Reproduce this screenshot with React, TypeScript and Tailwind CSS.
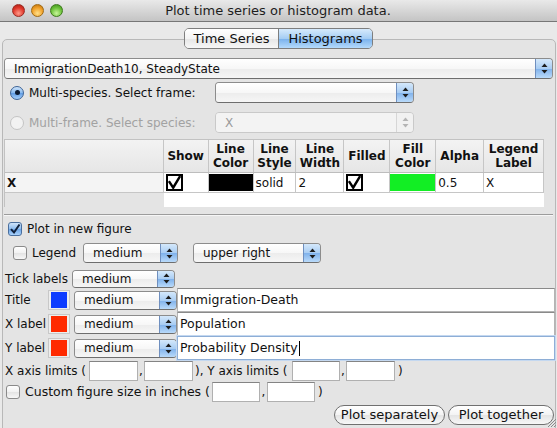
import React from "react";

function Arrows({ disabled }: { disabled?: boolean }) {
  const c = disabled ? "#b4b4b4" : "#1c1c1c";
  return (
    <svg width="7" height="11" viewBox="0 0 7 11">
      <polygon points="3.5,0.5 6.5,4 0.5,4" fill={c} />
      <polygon points="0.5,7 6.5,7 3.5,10.5" fill={c} />
    </svg>
  );
}

function Combo({ w, text, disabled }: { w: string; text?: string; disabled?: boolean }) {
  return (
    <div
      className={`flex h-full ${w} overflow-hidden rounded-[4px] border ${
        disabled ? "border-[#c9c9c9] text-[#9a9a9a]" : "border-[#8c8c8c] border-b-[#6e6e6e] text-[#111]"
      }`}
    >
      <div
        className={`flex flex-1 items-center pl-[9px] ${
          disabled
            ? "bg-[#f3f3f3]"
            : "bg-[linear-gradient(to_bottom,#ffffff_0%,#f7f7f7_50%,#ececec_51%,#f6f6f6_100%)]"
        }`}
      >
        {text}
      </div>
      <div
        className={`flex w-[17px] items-center justify-center border-l ${
          disabled
            ? "border-[#d6d6d6] bg-[#f1f1f1]"
            : "border-[#6f8fbf] bg-[linear-gradient(to_bottom,#d4e8fb_0%,#a9cdf3_50%,#7fb1eb_51%,#b9dafa_100%)]"
        }`}
      >
        <Arrows disabled={disabled} />
      </div>
    </div>
  );
}

function Field({ w }: { w: string }) {
  return <div className={`h-full ${w} border border-[#b0b0b0] border-t-[#848484] bg-white`} />;
}

function AquaCheck({ checked }: { checked?: boolean }) {
  return (
    <div
      className={`flex h-[14px] w-[14px] items-center justify-center rounded-[3px] border ${
        checked
          ? "border-[#4a6f9e] bg-[linear-gradient(to_bottom,#d0e5fb,#8cbcef_50%,#6aa3e6_51%,#a9d2fb)]"
          : "border-[#8a8a8a] bg-[linear-gradient(to_bottom,#ffffff,#f1f1f1_50%,#e3e3e3_51%,#f7f7f7)]"
      }`}
    >
      {checked && (
        <svg width="12" height="12" viewBox="0 0 12 12">
          <path d="M2 6.2 L5 9.5 L10.5 1.5" fill="none" stroke="#10203a" strokeWidth="2" />
        </svg>
      )}
    </div>
  );
}

function Radio({ checked, disabled }: { checked?: boolean; disabled?: boolean }) {
  return (
    <div
      className={`flex h-[14px] w-[14px] items-center justify-center rounded-full border ${
        checked
          ? "border-[#3d6396] bg-[linear-gradient(to_bottom,#cde3fa,#86b8ee_50%,#5f9be3_51%,#a6d0fb)]"
          : disabled
          ? "border-[#c4c4c4] bg-[#f2f2f2]"
          : "border-[#8a8a8a] bg-white"
      }`}
    >
      {checked && <div className="h-[5px] w-[5px] rounded-full bg-[#0c1a30]" />}
    </div>
  );
}

function TableCheck() {
  return (
    <div className="flex h-[17px] w-[17px] items-center justify-center border-2 border-black bg-white">
      <svg width="15" height="15" viewBox="0 0 15 15">
        <path d="M1 6 L6 13.5 L14 0" fill="none" stroke="#000" strokeWidth="2.8" />
      </svg>
    </div>
  );
}

function Swatch({ color }: { color: string }) {
  return (
    <div className="flex h-[20px] w-[22px] items-center justify-center border border-[#c8c8c8] bg-[#ededed]">
      <div className={`h-[16px] w-[16px] ${color}`} />
    </div>
  );
}

function LabelRow({ label, swatch, text, focused }: { label: string; swatch: string; text: string; focused?: boolean }) {
  return (
    <div className="flex h-[24px] items-center">
      <div className="w-[44px] pl-[1px]">{label}</div>
      <Swatch color={swatch} />
      <div className="ml-[4px] h-[19px]">
        <Combo w="w-[103px]" text="medium" />
      </div>
      <div
        className={`flex h-full flex-1 items-center border bg-white pl-[2px] text-[12.5px] ${
          focused ? "border-[#8eaed6] shadow-[0_0_0_1px_#c4d8f0]" : "border-[#b4b4b4] border-t-[#8a8a8a]"
        }`}
      >
        {text}
        {focused && <span className="ml-[1px] inline-block h-[15px] w-[1px] bg-black" />}
      </div>
    </div>
  );
}

const cols = [
  { w: "w-[159px]", label: "" },
  { w: "w-[45px]", label: "Show" },
  { w: "w-[45px]", label: "Line\nColor" },
  { w: "w-[43px]", label: "Line\nStyle" },
  { w: "w-[48px]", label: "Line\nWidth" },
  { w: "w-[46px]", label: "Filled" },
  { w: "w-[46px]", label: "Fill\nColor" },
  { w: "w-[48px]", label: "Alpha" },
  { w: "w-[60px]", label: "Legend\nLabel" },
];

export default function App() {
  return (
    <div className="relative h-[428px] w-[557px] overflow-hidden bg-[#e9e9e9] font-['DejaVu_Sans',sans-serif] text-[12px] text-[#111]">
      {/* title bar */}
      <div className="relative flex h-[22px] items-center border-b border-[#777] bg-[linear-gradient(to_bottom,#e9e9e9,#c4c4c4)] text-[13px] text-[#1d1d1d]">
        <div className="flex gap-[6px] pl-[12px]">
          <div className="h-[13px] w-[13px] rounded-full border border-[#9a2a22] bg-[radial-gradient(circle_at_50%_75%,#ff9a8a,#e0392c_55%,#a81a10)]" />
          <div className="h-[13px] w-[13px] rounded-full border border-[#a06a12] bg-[radial-gradient(circle_at_50%_75%,#ffe08a,#f0a12a_55%,#b86a08)]" />
          <div className="h-[13px] w-[13px] rounded-full border border-[#3d7a1c] bg-[radial-gradient(circle_at_50%_75%,#c8f59a,#6cc23a_55%,#3a8a18)]" />
        </div>
        <div className="flex-1 pr-[64px] text-center">Plot time series or histogram data.</div>
      </div>

      {/* tabs */}
      <div className="relative z-10 mt-[6px] flex h-[21px] justify-center">
        <div className="flex overflow-hidden rounded-[5px] border border-[#7e7e7e] text-[13px]">
          <div className="flex w-[94px] items-center justify-center border-r border-[#7e7e7e] bg-[linear-gradient(to_bottom,#ffffff,#f4f4f4_50%,#e6e6e6_51%,#f7f7f7)]">
            Time Series
          </div>
          <div className="flex w-[93px] items-center justify-center bg-[linear-gradient(to_bottom,#d6eafc,#a5cdf4_50%,#78b0ec_51%,#b4dafc)]">
            Histograms
          </div>
        </div>
      </div>

      {/* panel */}
      <div className="-mt-[10px] ml-[2px] w-[554px] rounded-[5px] border border-[#b8b8b8] bg-[#e4e4e4] pl-[1px] pt-[18px] pb-[40px]">
        <div className="h-[21px]">
          <Combo w="w-[549px]" text="ImmigrationDeath10, SteadyState" />
        </div>

        <div className="mt-[3px] flex h-[21px] items-center">
          <div className="ml-[6px] mr-[5px]">
            <Radio checked />
          </div>
          <div className="w-[186px]">Multi-species. Select frame:</div>
          <div className="h-full">
            <Combo w="w-[199px]" />
          </div>
        </div>

        <div className="mt-[9px] flex h-[21px] items-center text-[#a2a2a2]">
          <div className="ml-[6px] mr-[5px]">
            <Radio disabled />
          </div>
          <div className="w-[186px]">Multi-frame. Select species:</div>
          <div className="h-full">
            <Combo w="w-[199px]" text="X" disabled />
          </div>
        </div>

        {/* table */}
        <div className="mt-[6px] w-[540px] border-l border-t border-[#c2c2c2]">
          <div className="flex h-[33px] border-b border-[#bdbdbd] bg-[linear-gradient(to_bottom,#f3f3f3,#e6e6e6)] text-[12px] font-bold leading-[14px]">
            {cols.map((c, i) => (
              <div
                key={i}
                className={`flex ${c.w} items-center justify-center whitespace-pre border-r border-[#c6c6c6] text-center`}
              >
                {c.label}
              </div>
            ))}
          </div>
          <div className="flex h-[20px] border-b border-[#c6c6c6] bg-white">
            <div className="flex w-[159px] items-center border-r border-[#c6c6c6] bg-[#f4f4f4] pl-[2px] font-bold">X</div>
            <div className="flex w-[45px] items-center border-r border-[#c6c6c6] pl-[2px]">
              <TableCheck />
            </div>
            <div className="flex w-[45px] items-stretch border-r border-[#c6c6c6] py-[1px]">
              <div className="flex-1 bg-black" />
            </div>
            <div className="flex w-[43px] items-center border-r border-[#c6c6c6] pl-[2px]">solid</div>
            <div className="flex w-[48px] items-center border-r border-[#c6c6c6] pl-[2px]">2</div>
            <div className="flex w-[46px] items-center border-r border-[#c6c6c6] pl-[2px]">
              <TableCheck />
            </div>
            <div className="flex w-[46px] items-stretch border-r border-[#c6c6c6] py-[1px]">
              <div className="flex-1 bg-[#12ee24]" />
            </div>
            <div className="flex w-[48px] items-center border-r border-[#c6c6c6] pl-[2px]">0.5</div>
            <div className="flex w-[60px] items-center border-r border-[#c6c6c6] pl-[2px]">X</div>
          </div>
          <div className="flex h-[14px]">
            <div className="w-[159px]" />
            <div className="flex-1 bg-white" />
          </div>
        </div>

        <div className="mt-[7px] h-[2px] w-[549px] border-t border-[#9c9c9c] border-b border-b-[#f6f6f6]" />

        <div className="mt-[4px] flex h-[18px] items-center">
          <div className="ml-[4px] mr-[5px]">
            <AquaCheck checked />
          </div>
          <div>Plot in new figure</div>
        </div>

        <div className="mt-[5px] flex h-[20px] items-center">
          <div className="ml-[9px] mr-[5px]">
            <AquaCheck />
          </div>
          <div className="w-[51px]">Legend</div>
          <div className="h-full">
            <Combo w="w-[95px]" text="medium" />
          </div>
          <div className="ml-[15px] h-full">
            <Combo w="w-[128px]" text="upper right" />
          </div>
        </div>

        <div className="mt-[6px] flex h-[19px] items-center">
          <div className="w-[68px] pl-[1px]">Tick labels</div>
          <div className="h-[18px]">
            <Combo w="w-[103px]" text="medium" />
          </div>
        </div>

        <LabelRow label="Title" swatch="bg-[#0d3cff]" text="Immigration-Death" />
        <LabelRow label="X label" swatch="bg-[#ff2a00]" text="Population" />
        <LabelRow label="Y label" swatch="bg-[#ff2a00]" text="Probability Density" focused />

        <div className="mt-[1px] flex h-[20px] items-center">
          <div className="w-[85px] pl-[1px]">X axis limits (</div>
          <Field w="w-[49px]" />
          <div className="w-[6px] text-center">,</div>
          <Field w="w-[49px]" />
          <div className="w-[99px] pl-[2px]">), Y axis limits (</div>
          <Field w="w-[48px]" />
          <div className="w-[6px] text-center">,</div>
          <Field w="w-[49px]" />
          <div className="pl-[3px]">)</div>
        </div>

        <div className="mt-[1px] flex h-[20px] items-center">
          <div className="ml-[2px] mr-[5px]">
            <AquaCheck />
          </div>
          <div className="w-[187px] text-[12.5px]">Custom figure size in inches (</div>
          <Field w="w-[48px]" />
          <div className="w-[7px] text-center">,</div>
          <Field w="w-[48px]" />
          <div className="pl-[3px]">)</div>
        </div>

        <div className="mt-[3px] flex h-[20px] justify-end gap-[3px] pr-[1px] text-[13px]">
          <div className="flex w-[111px] items-center justify-center rounded-full border border-[#707070] bg-[linear-gradient(to_bottom,#ffffff,#f3f3f3_50%,#e4e4e4_51%,#f7f7f7)]">
            Plot separately
          </div>
          <div className="flex w-[106px] items-center justify-center rounded-full border border-[#707070] bg-[linear-gradient(to_bottom,#ffffff,#f3f3f3_50%,#e4e4e4_51%,#f7f7f7)]">
            Plot together
          </div>
        </div>
      </div>

      {/* resize grip */}
      <svg className="absolute bottom-0 right-0" width="12" height="12" viewBox="0 0 12 12">
        <path d="M11 3 L3 11 M11 6 L6 11 M11 9 L9 11" stroke="#8a8a8a" strokeWidth="1" />
      </svg>
    </div>
  );
}
